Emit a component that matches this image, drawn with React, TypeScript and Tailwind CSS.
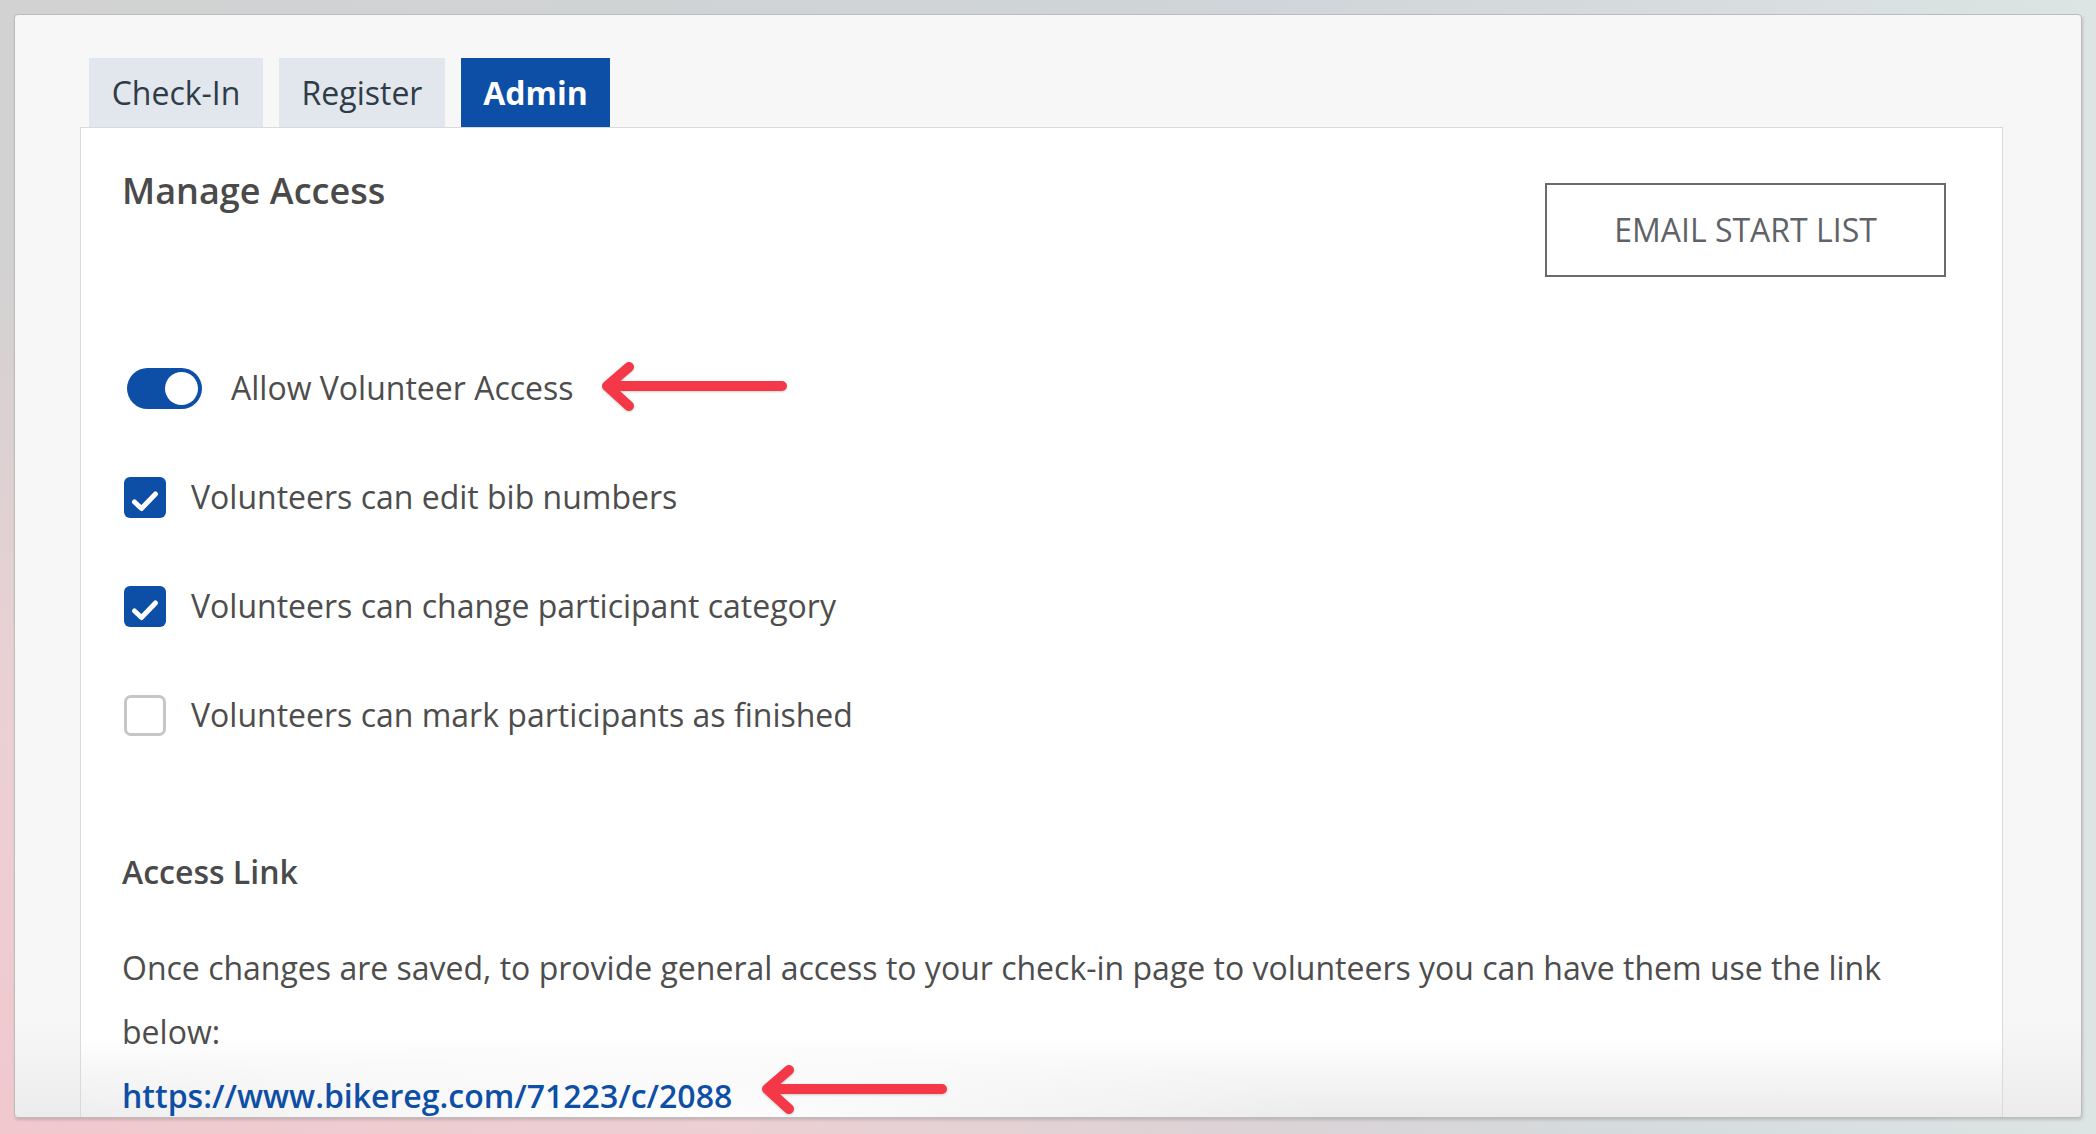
import { useState } from "react";

const font = { fontFamily: '"Open Sans", "Noto Sans", sans-serif' };

function RedArrow() {
  return (
    <svg width="190" height="50" viewBox="0 0 190 50" className="shrink-0 drop-shadow-[0_1px_1px_rgba(0,0,0,0.18)]">
      <path d="M182 24 H7 M29 5 L7 24 L29 44" fill="none" stroke="#f43848" strokeWidth="10" strokeLinecap="round" strokeLinejoin="round" />
    </svg>
  );
}

function Toggle({ on }: { on: boolean }) {
  return (
    <div className={`ml-[5px] flex h-[41px] w-[75px] shrink-0 items-center rounded-full px-[4px] ${on ? "justify-end bg-[#0d4ea6]" : "justify-start bg-[#c4c4c4]"}`}>
      <div className="h-[33px] w-[33px] rounded-full bg-white" />
    </div>
  );
}

function Checkbox({ checked }: { checked: boolean }) {
  if (!checked) {
    return <div className="ml-[2px] h-[41px] w-[42px] shrink-0 rounded-[7px] border-[3px] border-[#c6c6c6] bg-white" />;
  }
  return (
    <div className="ml-[2px] flex h-[41px] w-[42px] shrink-0 items-center justify-center rounded-[6px] bg-[#0d4ea6]">
      <svg width="42" height="41" viewBox="0 0 42 41">
        <path d="M10.5 25 L17.5 31.5 L31.5 17" fill="none" stroke="white" strokeWidth="5" strokeLinecap="round" strokeLinejoin="round" />
      </svg>
    </div>
  );
}

export default function App() {
  const [activeTab] = useState("Admin");
  const tabs = [
    { name: "Check-In", width: "w-[174px]" },
    { name: "Register", width: "w-[166px]" },
    { name: "Admin", width: "w-[149px]" },
  ];
  const options = [
    { label: "Volunteers can edit bib numbers", checked: true },
    { label: "Volunteers can change participant category", checked: true },
    { label: "Volunteers can mark participants as finished", checked: false },
  ];

  return (
    <div
      className="h-[1134px] w-[2096px] overflow-hidden bg-[radial-gradient(ellipse_at_0%_100%,#f0c8ce_0%,#ecd0d3_25%,transparent_55%),linear-gradient(to_right,#d2d2d2_0%,#cfd5d8_60%,#dde4e4_100%)] pl-[14px] pt-[14px]"
      style={font}
    >
      <div className="h-[1104px] w-[2068px] overflow-hidden rounded-[4px] border border-[#bcbcbc] bg-[linear-gradient(to_bottom,#f7f7f7_0%,#f7f7f7_91%,#ececec_100%)] pl-[65px] pt-[43px] shadow-[1px_2px_3px_rgba(0,0,0,0.15)]">
        {/* tabs */}
        <div className="ml-[9px] flex gap-[16px]">
          {tabs.map((tab) => (
            <div
              key={tab.name}
              className={`flex h-[69px] items-center justify-center text-[32px] ${tab.width} ${
                activeTab === tab.name ? "bg-[#0d4ea6] font-bold text-white" : "bg-[#e1e7ed] text-[#2f3c47]"
              }`}
            >
              {tab.name}
            </div>
          ))}
        </div>

        {/* panel */}
        <div className="h-[990px] w-[1923px] border-x border-t border-[#dadada] bg-[radial-gradient(ellipse_35%_80px_at_30%_100%,#ffffff_0%,rgba(255,255,255,0)_100%),linear-gradient(to_bottom,#ffffff_0%,#ffffff_92%,#ebebeb_100%)] pl-[41px] pr-[56px] pt-[39px]">
          <div className="flex items-start justify-between">
            <h2 className="text-[36px] font-semibold leading-[48px] text-[#4a4a4a]">Manage Access</h2>
            <button className="mt-[16px] flex h-[94px] w-[401px] items-center justify-center border-2 border-[#676b6f] text-[32px] text-[#5f6368]">
              EMAIL START LIST
            </button>
          </div>

          <div className="mt-[87px] flex flex-col gap-[61px]">
            <div className="flex h-[48px] items-center">
              <Toggle on />
              <span className="ml-[29px] text-[32px] text-[#4d4d4d]">Allow Volunteer Access</span>
              <div className="ml-[26px] mt-[-2px]">
                <RedArrow />
              </div>
            </div>
            {options.map((option) => (
              <div key={option.label} className="flex h-[48px] items-center">
                <Checkbox checked={option.checked} />
                <span className="ml-[25px] text-[32px] text-[#4d4d4d]">{option.label}</span>
              </div>
            ))}
          </div>

          <h3 className="mt-[109px] text-[32px] font-semibold leading-[48px] text-[#4a4a4a]">Access Link</h3>
          <p className="mt-[40px] text-[32px] leading-[64px] text-[#4d4d4d]">
            Once changes are saved, to provide general access to your check-in page to volunteers you can have them use the link
            below:
          </p>
          <div className="flex h-[64px] items-center">
            <a className="text-[32px] font-semibold text-[#0d4ea6]">https://www.bikereg.com/71223/c/2088</a>
            <div className="ml-[28px] mt-[-12px]">
              <RedArrow />
            </div>
          </div>
        </div>
      </div>
    </div>
  );
}
